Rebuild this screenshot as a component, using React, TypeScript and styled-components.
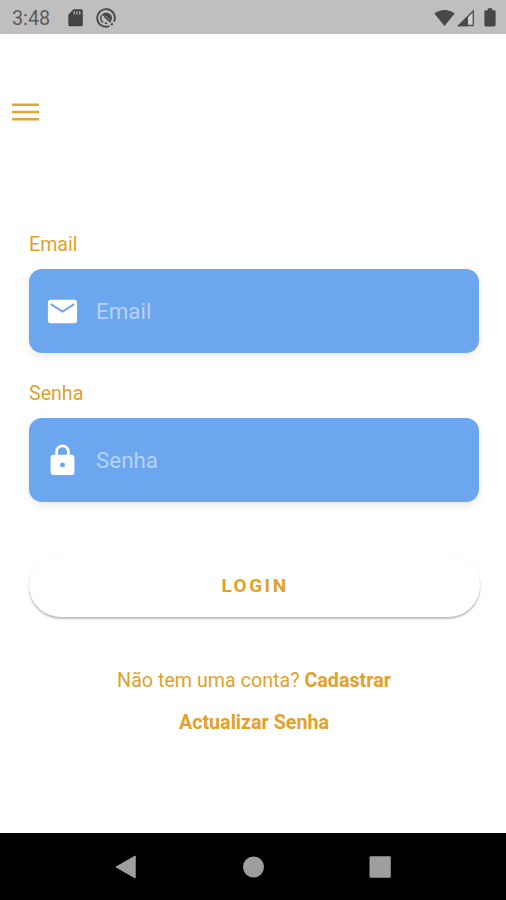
import React from "react";
import styled, { createGlobalStyle } from "styled-components";

const GlobalStyle = createGlobalStyle`
  *, *::before, *::after { box-sizing: border-box; }
  body { margin: 0; background: #fff; }
`;

const ACCENT = "#e2a12b";

const Screen = styled.div`
  width: 506px;
  height: 900px;
  display: flex;
  flex-direction: column;
  overflow: hidden;
  background: #fff;
  color: ${ACCENT};
  font-family: Roboto, "Liberation Sans", sans-serif;
`;

const StatusBar = styled.header`
  height: 34px;
  flex: none;
  display: flex;
  align-items: center;
  justify-content: space-between;
  padding: 1px 10px 0 12px;
  background: #bfbfbf;
  color: #484848;
`;

const StatusGroup = styled.div<{ $gap: number }>`
  display: flex;
  align-items: center;
  gap: ${(p) => p.$gap}px;
  svg { display: block; }
`;

const Clock = styled.time`
  width: 43px;
  font-size: 19.8px;
  line-height: 24px;
  padding-top: 2px;
  color: #5c5c5c;
`;

const SignalCluster = styled.div`
  display: flex;
  align-items: center;
  gap: 2px;
`;

const MenuButton = styled.button`
  flex: none;
  width: 27px;
  height: 18px;
  margin: 69px 0 0 12px;
  padding: 0;
  border: 0;
  background: none;
  svg { display: block; }
`;

const Form = styled.form`
  flex: 1;
  display: flex;
  flex-direction: column;
  padding: 111px 27px 0 29px;
`;

const Field = styled.div`
  display: flex;
  flex-direction: column;
  height: 149px;
`;

const Label = styled.label`
  height: 37px;
  padding-top: 1px;
  font-size: 19.6px;
  line-height: 24px;
`;

const InputBox = styled.div`
  height: 84px;
  display: flex;
  align-items: center;
  gap: 16px;
  padding: 0 16px;
  border-radius: 13px;
  background: #6ba6ef;
  box-shadow: 0 3px 9px rgba(0, 0, 0, 0.09);
  svg { flex: none; display: block; }
`;

const Input = styled.input`
  flex: 1;
  min-width: 0;
  height: 30px;
  padding: 0;
  border: 0;
  outline: 0;
  background: transparent;
  color: #fff;
  font: 22.4px/30px Roboto, "Liberation Sans", sans-serif;
  &::placeholder { color: #b6d3f9; opacity: 1; }
`;

const LoginButton = styled.button`
  height: 63px;
  margin: 24px -1px 0 0;
  padding: 0 0 0 1px;
  border: 0;
  border-radius: 32px;
  background: #fff;
  color: ${ACCENT};
  box-shadow: 0 2px 2px rgba(0, 0, 0, 0.22), 0 1px 3px rgba(0, 0, 0, 0.08);
  font: 700 19px/24px Roboto, "Liberation Sans", sans-serif;
  letter-spacing: 2.5px;
`;

const Links = styled.div`
  display: flex;
  flex-direction: column;
  align-items: center;
  gap: 18px;
  padding-top: 52px;
  font-size: 19.7px;
  line-height: 24px;
`;

const Strong = styled.a`
  font-weight: 700;
`;

const NavBar = styled.nav`
  height: 67px;
  flex: none;
  display: flex;
  align-items: center;
  justify-content: space-between;
  padding: 0 115px;
  background: #000;
  svg { display: block; }
`;

const SdCardIcon = () => (
  <svg width="15" height="18" viewBox="0 0 15 18">
    <path fill="#444" d="M5.4.3h7.8c.9 0 1.6.7 1.6 1.6v13.8c0 .9-.7 1.6-1.6 1.6H1.9c-.9 0-1.6-.7-1.6-1.6V5.8Z" />
    <path stroke="#aaa" strokeWidth="1.4" d="M6.3 2.2v3.3M9 2.2v3.3M11.7 2.2v3.3" />
  </svg>
);

const SyncDiscIcon = () => (
  <svg width="20" height="20" viewBox="0 0 20 20" fill="none" stroke="#484848">
    <path strokeWidth="1.9" d="M13.3 18.1A8.8 8.8 0 1 1 18 13.6M15 17.1l1.8-1.5" />
    <path strokeWidth="1.6" d="M7.1 14.3a5.2 5.2 0 0 1-1.6-7M14.6 7.4a5.2 5.2 0 0 1-.2 5.3M8.8 15.1a5.2 5.2 0 0 0 2.4 0" />
    <path fill="#484848" stroke="none" d="M5.4 7.5C7 4.7 9.4 4.2 11.5 4.7c3.2.8 4.7 4.2 3.3 7.5L9.8 8Z" />
    <path strokeWidth="1.8" d="m8.3 8.4 6.4 5.6" />
  </svg>
);

const WifiIcon = () => (
  <svg width="21" height="18" viewBox="0 0 21 18">
    <path fill="#484848" d="M.3 4.4C6.2-.3 14.8-.3 20.7 4.4L10.5 17Z" />
  </svg>
);

const SignalIcon = () => (
  <svg width="18" height="18" viewBox="0 0 18 18">
    <path fill="#d1d1d1" stroke="#555" strokeWidth="1.4" d="M1.8 16.5 16.3 2v14.5Z" />
    <path fill="#484848" d="M.5 17.2 11 6.7v10.5Z" />
  </svg>
);

const BatteryIcon = () => (
  <svg width="12" height="19" viewBox="0 0 12 19">
    <path fill="#484848" d="M3.8.3h4.4v2h2c.8 0 1.4.6 1.4 1.4v13.4c0 .8-.6 1.4-1.4 1.4H1.8c-.8 0-1.4-.6-1.4-1.4V3.7c0-.8.6-1.4 1.4-1.4h2Z" />
  </svg>
);

const MenuIcon = () => (
  <svg width="27" height="18" viewBox="0 0 27 18">
    <path stroke="#dfa53a" strokeWidth="2.6" d="M0 1.7h27M0 9h27M0 16.3h27" />
  </svg>
);

const MailIcon = () => (
  <svg width="35" height="35" viewBox="0 0 24 24">
    <rect x="2" y="4" width="20" height="16" rx="2" fill="#fff" />
    <path fill="none" stroke="#6ba6ef" strokeWidth="1.4" d="m4 7 8 5 8-5" />
  </svg>
);

const LockIcon = () => (
  <svg width="35" height="35" viewBox="0 0 24 24" fill="#fff">
    <path d="M18 8h-1V6A5 5 0 0 0 7 6v2H6a2.2 2.2 0 0 0-2.2 2.2v9.6c0 1.2 1 2.2 2.2 2.2h12a2.2 2.2 0 0 0 2.2-2.2v-9.6A2.2 2.2 0 0 0 18 8Zm-6 8.7a1.7 1.7 0 1 1 0-3.4 1.7 1.7 0 0 1 0 3.4Zm3.1-8.7H8.9V6a3.1 3.1 0 0 1 6.2 0v2Z" />
  </svg>
);

const BackIcon = () => (
  <svg width="21" height="24" viewBox="0 0 21 24">
    <path fill="#9e9e9e" stroke="#9e9e9e" strokeLinejoin="round" d="M1 12 20.2 1v22Z" />
  </svg>
);

const HomeIcon = () => (
  <svg width="22" height="22" viewBox="0 0 22 22">
    <circle cx="11.5" cy="11" r="10.5" fill="#9e9e9e" />
  </svg>
);

const RecentsIcon = () => (
  <svg width="22" height="22" viewBox="0 0 22 22">
    <rect x="0.5" y="0.2" width="21.3" height="21.6" rx="1.3" fill="#9e9e9e" />
  </svg>
);

export default function App() {
  return (
    <Screen>
      <GlobalStyle />
      <StatusBar>
        <StatusGroup $gap={13}>
          <Clock>3:48</Clock>
          <SdCardIcon />
          <SyncDiscIcon />
        </StatusGroup>
        <StatusGroup $gap={9}>
          <SignalCluster>
            <WifiIcon />
            <SignalIcon />
          </SignalCluster>
          <BatteryIcon />
        </StatusGroup>
      </StatusBar>
      <MenuButton type="button" aria-label="Menu">
        <MenuIcon />
      </MenuButton>
      <Form>
        <Field>
          <Label htmlFor="email">Email</Label>
          <InputBox>
            <MailIcon />
            <Input id="email" type="email" placeholder="Email" />
          </InputBox>
        </Field>
        <Field>
          <Label htmlFor="senha">Senha</Label>
          <InputBox>
            <LockIcon />
            <Input id="senha" type="password" placeholder="Senha" />
          </InputBox>
        </Field>
        <LoginButton type="button">LOGIN</LoginButton>
        <Links>
          <span>
            Não tem uma conta? <Strong>Cadastrar</Strong>
          </span>
          <Strong>Actualizar Senha</Strong>
        </Links>
      </Form>
      <NavBar>
        <BackIcon />
        <HomeIcon />
        <RecentsIcon />
      </NavBar>
    </Screen>
  );
}
